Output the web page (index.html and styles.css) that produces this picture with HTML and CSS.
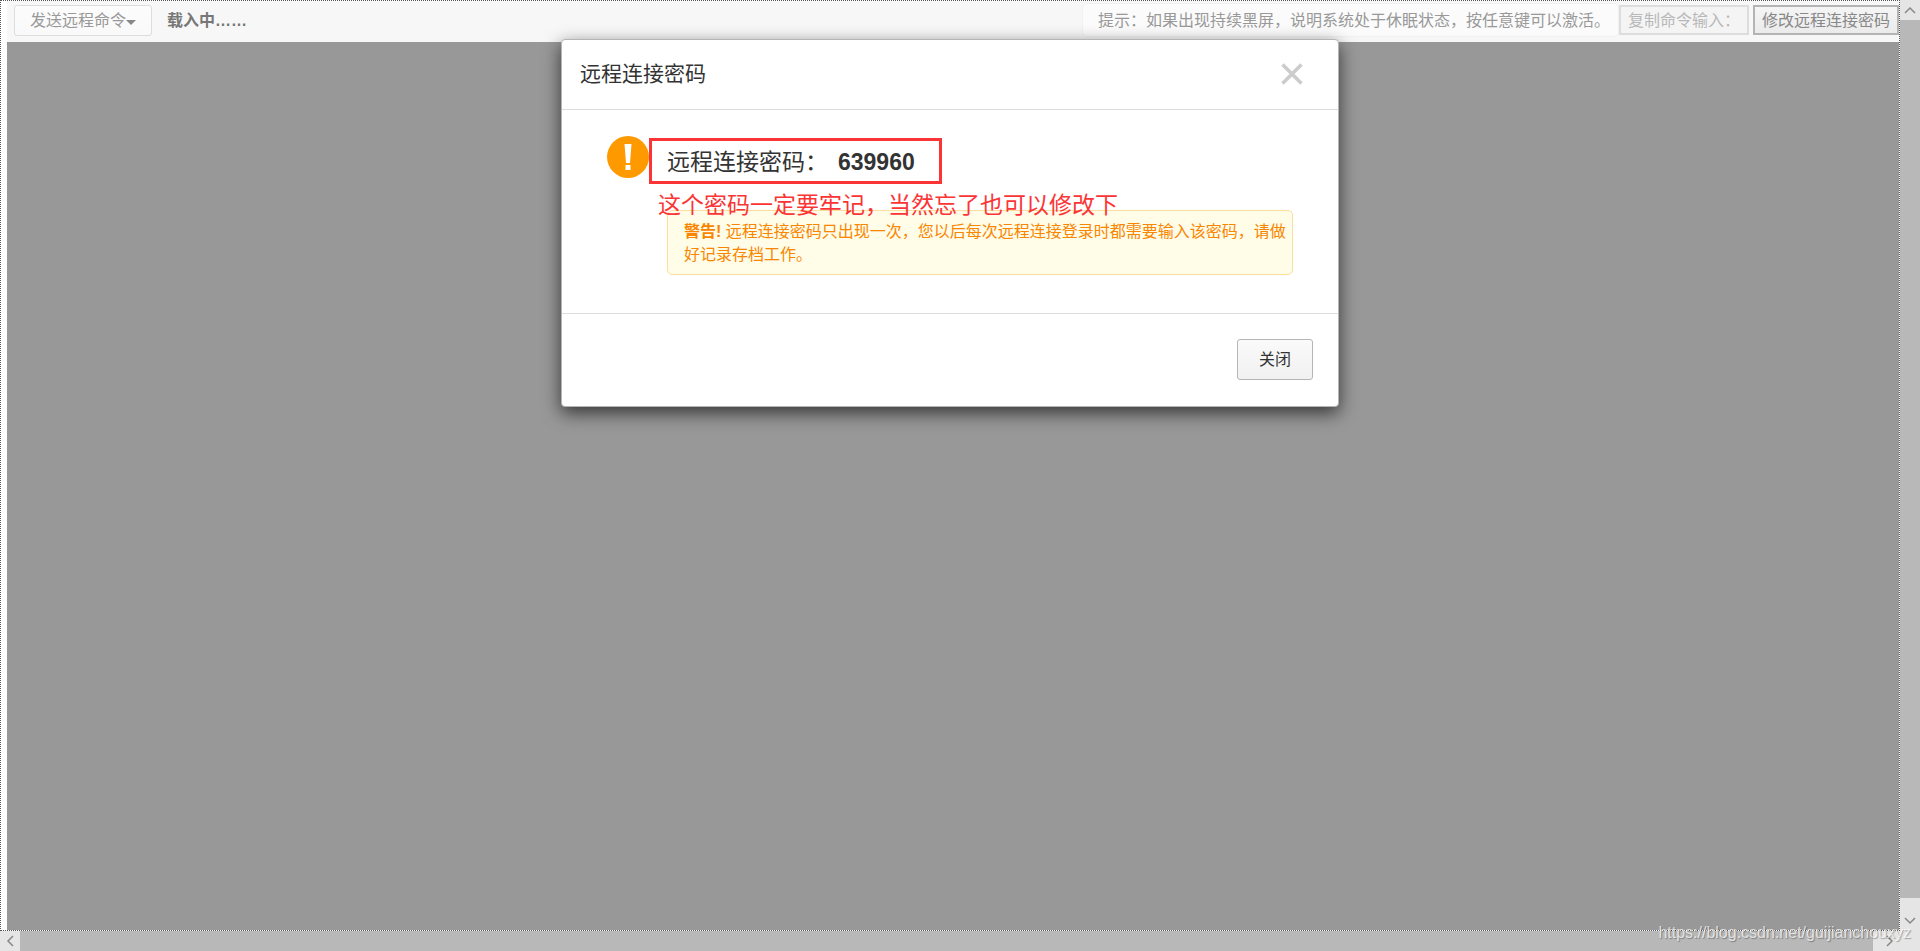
FILE: index.html
```html
<!DOCTYPE html>
<html lang="zh-CN">
<head>
<meta charset="utf-8">
<title>远程连接</title>
<link rel="stylesheet" href="styles.css">
</head>
<body>
<div class="shell">
  <main class="frame">
    <header class="toolbar">
      <button class="tool-button menu-button" type="button">发送远程命令<span class="caret"></span></button>
      <strong class="status">载入中……</strong>
      <p class="hint">提示：如果出现持续黑屏，说明系统处于休眠状态，按任意键可以激活。</p>
      <div class="actions">
        <button class="tool-button square muted" type="button">复制命令输入：</button>
        <button class="tool-button square" type="button">修改远程连接密码</button>
      </div>
    </header>
    <div class="screen"></div>
    <div class="overlay">
      <section class="dialog" role="dialog" aria-labelledby="dialog-title">
        <header class="dialog-head">
          <h1 class="dialog-title" id="dialog-title">远程连接密码</h1>
          <button class="close" type="button" aria-label="关闭对话框">
            <svg width="22" height="22" viewBox="0 0 22 22"><path d="M1.500 1.500L20.500 20.500M20.500 1.500L1.500 20.500" fill="none" stroke="#ccc" stroke-width="3.600"/></svg>
          </button>
        </header>
        <div class="dialog-body">
          <svg class="warn-icon" width="42" height="42" viewBox="0 0 42 42"><circle cx="21" cy="21" r="21" fill="#ff9900"/><path d="M17.500 8h7l-1.500 19h-4zM18.500 29h5v5h-5z" fill="#fff"/></svg>
          <div class="message">
            <p class="password">远程连接密码：<b>639960</b></p>
            <p class="note">这个密码一定要牢记，当然忘了也可以修改下</p>
            <p class="alert"><b>警告!</b> 远程连接密码只出现一次，您以后每次远程连接登录时都需要输入该密码，请做好记录存档工作。</p>
          </div>
        </div>
        <footer class="dialog-foot">
          <button class="dismiss" type="button">关闭</button>
        </footer>
      </section>
    </div>
  </main>
  <div class="scroll vertical">
    <span class="scroll-end"><svg width="12" height="8" viewBox="0 0 12 8"><path d="M1 7L6 2L11 7"/></svg></span>
    <span class="scroll-end far"><svg width="12" height="8" viewBox="0 0 12 8"><path d="M1 1L6 6L11 1"/></svg></span>
  </div>
  <div class="scroll horizontal">
    <span class="scroll-end"><svg width="8" height="12" viewBox="0 0 8 12"><path d="M7 1L2 6L7 11"/></svg></span>
    <span class="scroll-end far"><svg width="8" height="12" viewBox="0 0 8 12"><path d="M1 1L6 6L1 11"/></svg></span>
  </div>
  <div class="corner"></div>
  <span class="watermark">https://blog.csdn.net/guijianchouxyz</span>
</div>
</body>
</html>
```
FILE: styles.css
```css
* { box-sizing: border-box; }
body {
  margin: 0;
  font: 16px/23px "Liberation Sans", "Noto Sans CJK SC", sans-serif;
  color: #333;
  background: #fff;
}
button { font: inherit; cursor: pointer; }
p, h1 { margin: 0; }
.shell {
  position: relative;
  display: grid;
  grid-template: 1fr 20px / 1fr 20px;
  height: 100vh;
}
.frame {
  position: relative;
  display: flex;
  flex-direction: column;
  min-width: 0;
  padding-left: 6px;
  border: 1px dotted #555;
}
.toolbar {
  display: flex;
  align-items: center;
  height: 41px;
  padding: 0 0 3px 7px;
  background: #f7f7f7;
  white-space: nowrap;
}
.tool-button {
  color: #999;
  background: linear-gradient(#fcfcfc, #f9f9f9);
  border: 1px solid #ddd;
}
.menu-button {
  display: flex;
  align-items: center;
  height: 31px;
  padding: 0 15px;
  border-radius: 3px;
}
.caret {
  margin-top: 4px;
  border: 5px solid transparent;
  border-top-color: #888;
  border-bottom: 0;
}
.status { margin-left: 15px; color: #777; }
.hint {
  margin-left: auto;
  height: 34px;
  padding: 5px 8px 5px 15px;
  color: #999;
  background: #fbfbfb;
  border: 1px solid #f1f1f1;
  border-radius: 5px;
}
.actions { display: flex; gap: 4px; }
.square {
  height: 30px;
  padding: 0 7px;
  border: 2px solid #b4b4b4;
  background: linear-gradient(#f5f5f5, #ebebeb);
  color: #888;
}
.muted {
  background: #f4f4f4;
  border-color: #ddd;
  color: #b8b8b8;
}
.screen { flex: 1; background: #989898; }
.overlay {
  position: absolute;
  inset: 0;
  display: flex;
  justify-content: center;
  align-items: flex-start;
  padding-top: 38px;
}
.dialog {
  width: 778px;
  background: #fff;
  border: 1px solid #b5b5b5;
  border-radius: 4px;
  box-shadow: 0 6px 18px rgba(0, 0, 0, .65);
}
.dialog-head {
  display: flex;
  align-items: center;
  justify-content: space-between;
  height: 70px;
  padding: 0 35px 2px 18px;
  border-bottom: 1px solid #ddd;
}
.dialog-title { font-size: 21px; font-weight: 400; line-height: 30px; }
.close { display: flex; padding: 0; border: 0; background: none; }
.dialog-body {
  display: flex;
  align-items: flex-start;
  padding: 26px 45px 38px 45px;
}
.warn-icon { flex: none; }
.message { position: relative; flex: 1; padding-top: 2px; }
.password {
  width: max-content;
  padding: 6px 24px 4px 15px;
  border: 3px solid #fb3535;
  font-size: 23px;
  line-height: 30px;
}
.password b { margin-left: 10px; }
.note {
  position: absolute;
  top: 54px;
  left: 9px;
  font-size: 23px;
  line-height: 30px;
  color: #fb3535;
  white-space: nowrap;
}
.alert {
  margin: 26px 0 0 18px;
  padding: 9px 4px 8px 16px;
  color: #f88600;
  background: #fffce8;
  border: 1px solid #fbdf9c;
  border-radius: 5px;
}
.dialog-foot {
  display: flex;
  justify-content: flex-end;
  padding: 25px 25px 26px;
  border-top: 1px solid #ddd;
}
.dismiss {
  height: 41px;
  padding: 0 21px;
  color: #333;
  background: linear-gradient(#fafafa, #f1f1f1);
  border: 1px solid #b5b5b5;
  border-radius: 3px;
}
.scroll {
  display: flex;
  justify-content: space-between;
  background: #b8b8b8;
}
.vertical { flex-direction: column; }
.scroll-end {
  display: flex;
  align-items: center;
  justify-content: center;
  min-width: 20px;
  min-height: 20px;
  background: #e5e5e5;
}
.scroll-end path { fill: none; stroke: #888; stroke-width: 1.500; }
.vertical .far { align-items: flex-start; height: 33px; padding-top: 19px; }
.horizontal .far { width: 27px; padding-left: 6px; }
.corner { background: #e5e5e5; }
.watermark {
  position: absolute;
  right: 9px;
  bottom: 7px;
  color: rgba(255, 255, 255, .7);
  text-shadow: 1px 1px 1px rgba(0, 0, 0, .3);
}
```
